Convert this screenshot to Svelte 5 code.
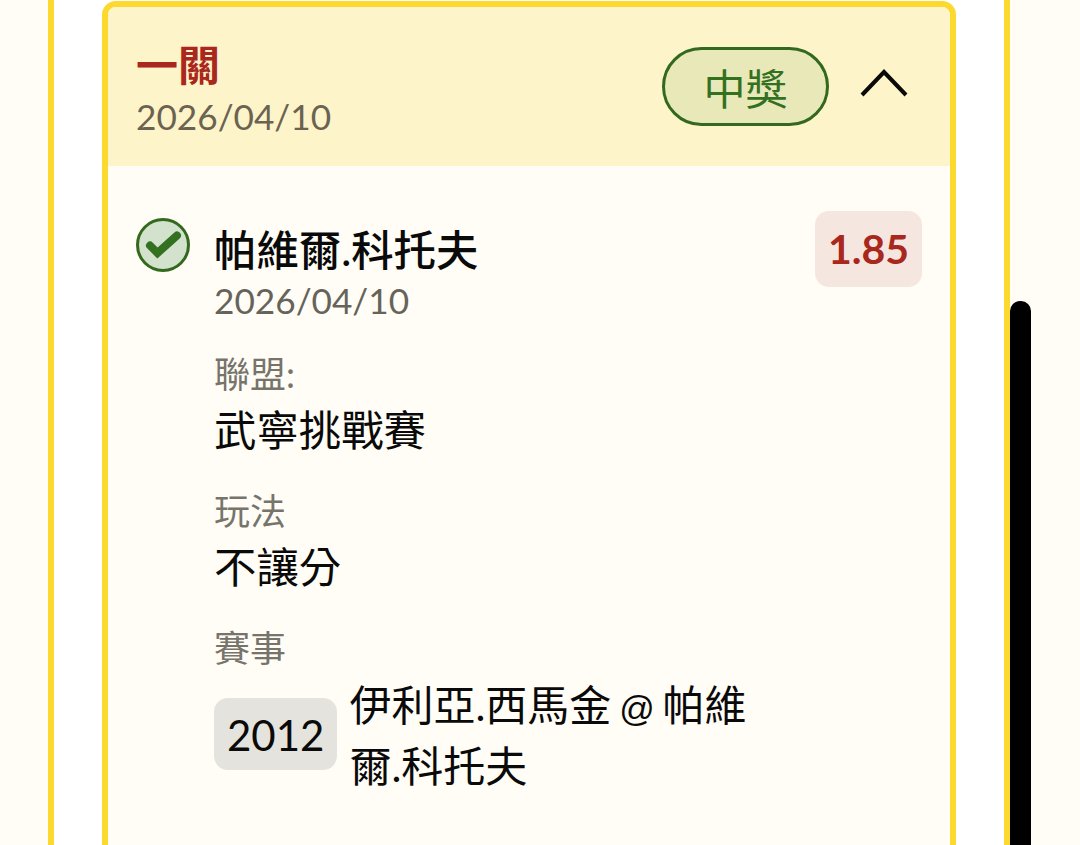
<script>
	const fields = [
		{ label: '聯盟:', value: '武寧挑戰賽' },
		{ label: '玩法', value: '不讓分' }
	];
</script>

<div class="page">
	<div class="panel">
		<section class="card">
			<header class="card-head">
				<div class="head-text">
					<div class="title">一關</div>
					<div class="date">2026/04/10</div>
				</div>
				<div class="head-side">
					<span class="status">中獎</span>
					<svg class="chevron" width="48" height="28" viewBox="0 0 48 28" fill="none">
						<path d="M2 26 L24 3 L46 26" stroke="#0a0a0a" stroke-width="4" />
					</svg>
				</div>
			</header>

			<div class="card-body">
				<svg class="check" width="54" height="54" viewBox="0 0 54 54">
					<circle cx="27" cy="27" r="25.5" fill="#d3e2cc" stroke="#33691e" stroke-width="3" />
					<path d="M14 27.5 L21.5 35 L41 17.5" fill="none" stroke="#33701f" stroke-width="8" stroke-linecap="round" />
				</svg>
				<div class="main">
					<div class="name">帕維爾.科托夫</div>
					<div class="sub-date">2026/04/10</div>
					{#each fields as f}
						<div class="field">
							<div class="label">{f.label}</div>
							<div class="value">{f.value}</div>
						</div>
					{/each}
					<div class="field">
						<div class="label">賽事</div>
						<div class="match">
							<span class="code">2012</span>
							<span class="teams">伊利亞.西馬金 <span class="at">@</span> 帕維爾.科托夫</span>
						</div>
					</div>
				</div>
				<div class="odds">1.85</div>
			</div>
		</section>
	</div>
	<div class="scroll-thumb"></div>
</div>

<style>
	:global(body) {
		margin: 0;
		background: #fffdf5;
		overflow: hidden;
	}

	.page {
		position: relative;
		height: 845px;
		overflow: hidden;
		padding: 0 70px 0 48px;
		font-family: Lato, 'Noto Sans CJK TC', sans-serif;
		color: #0a0a0a;
	}

	.panel {
		box-sizing: border-box;
		width: 962px;
		height: 845px;
		background: #ffffff;
		border-left: 6px solid #fbd92f;
		border-right: 6px solid #fbd92f;
		padding: 1px 48px 0;
	}

	.card {
		border: 6px solid #fbd92f;
		border-radius: 14px;
		background: #fffdf5;
		overflow: hidden;
		height: 900px;
	}

	.card-head {
		display: flex;
		justify-content: space-between;
		align-items: center;
		height: 159px;
		box-sizing: border-box;
		padding: 0 42px 0 28px;
		background: #fef4ca;
	}

	.title {
		font-size: 42px;
		font-weight: 700;
		line-height: 58px;
		color: #a9271c;
	}

	.date {
		font-size: 35.2px;
		line-height: 44px;
		color: #6b6350;
	}

	.head-side {
		display: flex;
		align-items: center;
		gap: 31px;
	}

	.chevron {
		margin-bottom: 8px;
	}

	.status {
		box-sizing: border-box;
		width: 167px;
		height: 79px;
		display: flex;
		align-items: center;
		justify-content: center;
		border: 3px solid #33691e;
		border-radius: 40px;
		background: #e9e8b9;
		color: #33701f;
		font-size: 42px;
	}

	.card-body {
		display: flex;
		align-items: flex-start;
		padding: 45px 28px 0;
	}

	.check {
		flex: none;
		margin: 7px 25px 0 0;
	}

	.main {
		flex: 1;
		min-width: 0;
		margin-left: -1px;
	}

	.name {
		font-size: 42.4px;
		font-weight: 500;
		line-height: 60px;
		margin-top: 9px;
	}

	.sub-date {
		font-size: 35.2px;
		line-height: 42px;
		margin-top: -1px;
		padding-bottom: 2px;
		color: #66635a;
	}

	.field {
		margin-top: 26px;
	}

	.label {
		font-size: 36px;
		line-height: 50px;
		color: #77746c;
	}

	.value {
		font-size: 42.4px;
		line-height: 60px;
		margin-top: 1px;
	}

	.match {
		display: flex;
		align-items: center;
		gap: 12px;
		margin-top: 2px;
	}

	.code {
		flex: none;
		padding: 0 13px;
		height: 72px;
		line-height: 74px;
		margin-bottom: 4px;
		border-radius: 14px;
		background: #e5e3dd;
		font-size: 42px;
	}

	.teams {
		width: 410px;
		font-size: 42px;
		line-height: 61px;
		word-spacing: -3px;
	}

	.at {
		font-family: 'Liberation Sans', sans-serif;
		font-size: 35px;
		line-height: 1;
	}

	.odds {
		flex: none;
		box-sizing: border-box;
		width: 107px;
		height: 76px;
		line-height: 76px;
		text-align: center;
		border-radius: 14px;
		background: #f5e6e0;
		color: #a9271c;
		font-size: 41px;
		font-weight: 700;
	}

	.scroll-thumb {
		position: absolute;
		left: 1010px;
		top: 301px;
		width: 21px;
		height: 600px;
		border-radius: 10px;
		background: #000000;
	}
</style>
